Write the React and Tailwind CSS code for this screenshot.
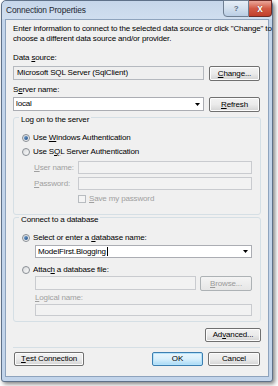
import React from "react";

const U = ({ children }) => (
  <span className="underline decoration-[0.6px] underline-offset-[1px]">{children}</span>
);

const Btn = ({ w, h = "h-[15px]", children, def, disabled }) => (
  <div
    className={`${w} ${h} shrink-0 flex items-center justify-center rounded-[2px] border ${
      def
        ? "border-[#3c7fb1] bg-gradient-to-b from-[#eaf6fd] via-[#d9f0fc] to-[#a7d9f5] shadow-[inset_0_0_0_1px_#b5e2fa]"
        : disabled
        ? "border-[#adb2b5] bg-gradient-to-b from-[#f4f4f4] to-[#e6e6e6] text-[#9a9a9a]"
        : "border-[#707070] bg-gradient-to-b from-[#f2f2f2] via-[#ebebeb] to-[#d3d3d3] shadow-[inset_0_0_0_1px_#fcfcfc]"
    }`}
  >
    {children}
  </div>
);

const Radio = ({ checked }) => (
  <span className="w-[8px] h-[8px] shrink-0 rounded-full border border-[#8a8f95] bg-gradient-to-br from-[#d8dadc] to-[#fbfbfb] flex items-center justify-center">
    {checked && (
      <span className="w-[4px] h-[4px] rounded-full bg-gradient-to-br from-[#7aa7d6] to-[#1d4a80]" />
    )}
  </span>
);

const Arrow = () => (
  <svg width="5" height="3" viewBox="0 0 5 3" className="mr-[3px]">
    <path d="M0 0H5L2.5 3Z" fill="#000" />
  </svg>
);

export default function App() {
  return (
    <div className="w-[278px] h-[386px] bg-white overflow-hidden font-['Liberation_Sans',Arial,sans-serif] text-[8px] tracking-[-0.15px] leading-[10px] text-black">
      <div className="relative ml-[1px] w-[272px] h-[382px] flex flex-col rounded-t-[5px] rounded-b-[3px] border border-[#5f7189] bg-[#c2d4ea] shadow-[2px_2px_4px_rgba(0,0,0,0.5)]">
        <div className="h-[18px] shrink-0 flex items-center pl-[4px] rounded-t-[5px] bg-gradient-to-b from-[#c6d6ea] to-[#d0deef] text-[8.4px] text-[#1e2833]">
          Connection Properties
        </div>
        <div className="absolute top-[-1px] right-0 flex">
          <div className="w-[26px] h-[17px] rounded-bl-[4px] border border-[#6f7f92] bg-gradient-to-b from-[#e6eef7] via-[#d3e0ee] to-[#b9cde4] flex items-center justify-center text-[8px] font-bold text-[#5d6e82]">
            ?
          </div>
          <div className="w-[23px] h-[17px] rounded-br-[4px] border border-l-0 border-[#6b2b26] bg-gradient-to-b from-[#e9a699] via-[#d25a45] to-[#c13f2b] flex items-center justify-center text-[10px] font-bold text-white [text-shadow:0_0_1px_#5a1a14]">
            x
          </div>
        </div>

        <div className="mx-[3px] mb-[4px] flex-1 border border-[#8ea3bd] bg-[#f0f0f0] flex flex-col pl-[7px]">
          <div className="mt-[4px] whitespace-nowrap">
            Enter information to connect to the selected data source or click "Change" to
            <br />
            choose a different data source and/or provider.
          </div>

          <div className="mt-[9px] h-[10px]">
            Data <U>s</U>ource:
          </div>
          <div className="mt-[3px] flex items-start">
            <div className="w-[191px] h-[14px] border border-[#b5b9bf] bg-[#efefef] flex items-center pl-[3px]">
              Microsoft SQL Server (SqlClient)
            </div>
            <div className="ml-[5px]">
              <Btn w="w-[51px]">
                <U>C</U>hange...
              </Btn>
            </div>
          </div>

          <div className="mt-[4px] h-[10px]">
            S<U>e</U>rver name:
          </div>
          <div className="mt-[2px] flex items-start">
            <div className="w-[191px] h-[14px] border border-[#abadb3] bg-white flex items-center justify-between pl-[2px]">
              <span>local</span>
              <Arrow />
            </div>
            <div className="ml-[5px]">
              <Btn w="w-[51px]">
                <U>R</U>efresh
              </Btn>
            </div>
          </div>

          <fieldset className="mt-[-2px] w-[248px] rounded-[3px] border border-[#d5dfe5] pl-[8px] pb-[11px]">
            <legend className="ml-[-3px] px-[2px] pt-[5px] leading-[10px]">Log on to the server</legend>
            <div className="mt-[8px] h-[10px] flex items-center gap-[3px]">
              <Radio checked />
              <span>
                Use <U>W</U>indows Authentication
              </span>
            </div>
            <div className="mt-[4px] h-[10px] flex items-center gap-[3px]">
              <Radio />
              <span>
                Use S<U>Q</U>L Server Authentication
              </span>
            </div>
            <div className="mt-[4px] flex items-center pl-[12px] text-[#a0a0a0]">
              <span className="w-[44px]">
                <U>U</U>ser name:
              </span>
              <div className="w-[174px] h-[13px] border border-[#c9cbcf] bg-[#f2f2f2]" />
            </div>
            <div className="mt-[3px] flex items-center pl-[12px] text-[#a0a0a0]">
              <span className="w-[44px]">
                <U>P</U>assword:
              </span>
              <div className="w-[174px] h-[13px] border border-[#c9cbcf] bg-[#f2f2f2]" />
            </div>
            <div className="mt-[4px] h-[9px] flex items-center pl-[56px] gap-[3px] text-[#a0a0a0]">
              <span className="w-[8px] h-[8px] border border-[#b8bcc0] bg-[#f4f4f4]" />
              <span>
                <U>S</U>ave my password
              </span>
            </div>
          </fieldset>

          <fieldset className="mt-[-5px] w-[248px] rounded-[3px] border border-[#d5dfe5] pl-[8px] pb-[5px]">
            <legend className="ml-[-3px] px-[2px] pt-[5px] leading-[10px]">Connect to a database</legend>
            <div className="mt-[8px] h-[10px] flex items-center gap-[3px]">
              <Radio checked />
              <span>
                Select or enter a <U>d</U>atabase name:
              </span>
            </div>
            <div className="mt-[2px] ml-[13px] w-[217px] h-[13px] border border-[#abadb3] bg-white flex items-center justify-between pl-[2px]">
              <span className="flex items-center">
                ModelFirst.Blogging
                <span className="ml-[1px] w-px h-[9px] bg-black" />
              </span>
              <Arrow />
            </div>
            <div className="mt-[7px] h-[10px] flex items-center gap-[3px]">
              <Radio />
              <span>
                Attac<U>h</U> a database file:
              </span>
            </div>
            <div className="mt-[1px] ml-[13px] flex items-start">
              <div className="w-[161px] h-[14px] border border-[#c9cbcf] bg-[#f2f2f2]" />
              <div className="ml-[4px]">
                <Btn w="w-[52px]" disabled>
                  <U>B</U>rowse...
                </Btn>
              </div>
            </div>
            <div className="mt-[2px] ml-[13px] h-[10px] text-[#a0a0a0]">
              <U>L</U>ogical name:
            </div>
            <div className="mt-[1px] ml-[13px] w-[217px] h-[12px] border border-[#c9cbcf] bg-[#f2f2f2]" />
          </fieldset>

          <div className="mt-[6px] w-[248px] flex justify-end">
            <Btn w="w-[56px]" h="h-[14px]">
              Ad<U>v</U>anced...
            </Btn>
          </div>
          <div className="mt-[5px] w-[247px] h-px bg-[#d5dfe5]" />
          <div className="mt-[4px] w-[248px] flex items-start pl-[1px]">
            <Btn w="w-[70px]" h="h-[14px]">
              <U>T</U>est Connection
            </Btn>
            <div className="ml-auto flex gap-[5px] mr-[1px]">
              <Btn w="w-[51px]" h="h-[14px]" def>
                OK
              </Btn>
              <Btn w="w-[52px]" h="h-[14px]">
                Cancel
              </Btn>
            </div>
          </div>
        </div>
      </div>
    </div>
  );
}
